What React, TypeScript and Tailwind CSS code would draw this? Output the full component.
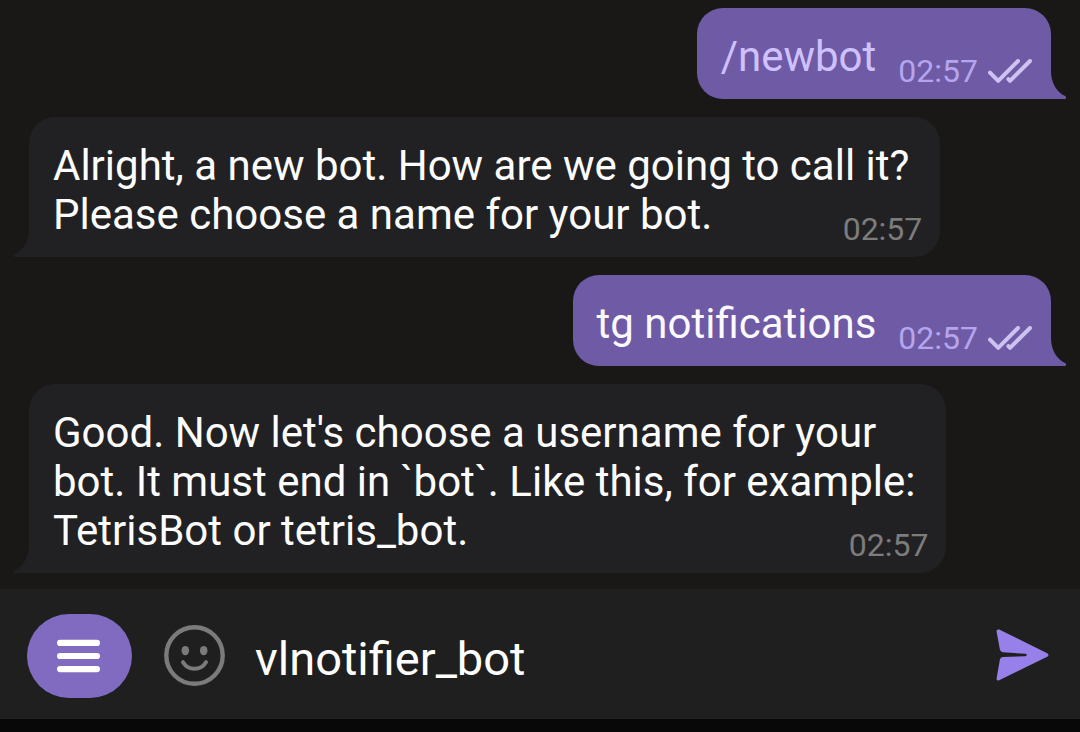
import { useState } from "react";

type Message = {
  id: number;
  outgoing: boolean;
  lines: string[];
  time: string;
  command?: boolean;
};

const messages: Message[] = [
  { id: 1, outgoing: true, lines: ["/newbot"], time: "02:57", command: true },
  {
    id: 2,
    outgoing: false,
    lines: [
      "Alright, a new bot. How are we going to call it?",
      "Please choose a name for your bot.",
    ],
    time: "02:57",
  },
  { id: 3, outgoing: true, lines: ["tg notifications"], time: "02:57" },
  {
    id: 4,
    outgoing: false,
    lines: [
      "Good. Now let's choose a username for your",
      "bot. It must end in `bot`. Like this, for example:",
      "TetrisBot or tetris_bot.",
    ],
    time: "02:57",
  },
];

function ReadTicks() {
  return (
    <svg
      className="h-6 w-11"
      viewBox="0 0 44 24"
      fill="none"
      stroke="currentColor"
      strokeWidth="4"
      strokeLinecap="round"
      strokeLinejoin="round"
      role="img"
      aria-label="Read"
    >
      <path d="M2 13.6L10.2 21.8L30 2" />
      <path d="M20.4 20.2L22 21.8L42 2" />
    </svg>
  );
}

function OutgoingMessage({ message }: { message: Message }) {
  const text = message.lines.join(" ");
  return (
    <li className="relative flex items-end gap-[22px] self-end rounded-[26px] rounded-br-none bg-[#6e5aa5] pl-6 pr-[19px]">
      {message.command ? (
        <a href="#newbot" className="pt-6 pb-[18px] text-[#cfc1ff]">
          {text}
        </a>
      ) : (
        <p className="pt-6 pb-[18px] text-[#fbf9fe]">{text}</p>
      )}
      <div className="flex items-center gap-2.5 pb-[9px] text-[32px] leading-[38px] text-[#b5a5ee]">
        <time>{message.time}</time>
        <span className="text-[#cdc2f0]">
          <ReadTicks />
        </span>
      </div>
      <svg
        className="absolute bottom-0 left-full h-9 w-[15px] text-[#6e5aa5]"
        viewBox="0 0 15 36"
        fill="currentColor"
        aria-hidden="true"
      >
        <path d="M0 0V36H14C15.2 36 15.4 33.4 14.2 33C6 29.5 0 20 0 8Z" />
      </svg>
    </li>
  );
}

function IncomingMessage({ message }: { message: Message }) {
  const lastLine = message.lines[message.lines.length - 1];
  return (
    <li className="relative self-start rounded-[26px] rounded-bl-none bg-[#212123] pt-6 pr-[31px] pb-[18px] pl-6 text-[#fcfcfc]">
      {message.lines.slice(0, -1).map((line) => (
        <p key={line}>{line}</p>
      ))}
      <div className="mr-[-13px] flex items-end justify-between">
        <p>{lastLine}</p>
        <time className="mb-[-9px] text-[32px] leading-[38px] text-[#7c7c7d]">
          {message.time}
        </time>
      </div>
      <svg
        className="absolute right-full bottom-0 h-9 w-[15px] text-[#212123]"
        viewBox="0 0 15 36"
        fill="currentColor"
        aria-hidden="true"
      >
        <path d="M15 0V36H1C-0.2 36 -0.4 33.4 0.8 33C9 29.5 15 20 15 8Z" />
      </svg>
    </li>
  );
}

function Composer() {
  const [draft, setDraft] = useState("vlnotifier_bot");
  return (
    <form
      className="flex items-center bg-[#1f1f1f] pt-[25px] pr-[31px] pb-[21px] pl-[27px]"
      onSubmit={(event) => event.preventDefault()}
    >
      <button
        type="button"
        aria-label="Bot menu"
        className="flex h-[84px] w-[105px] shrink-0 items-center justify-center rounded-full bg-[#806bc1]"
      >
        <svg className="h-[34px] w-[45px]" viewBox="0 0 45 34" fill="#fff" aria-hidden="true">
          <rect x="0" y="0.8" width="43" height="6.2" rx="3.1" />
          <rect x="0" y="13.9" width="43" height="6.2" rx="3.1" />
          <rect x="0" y="27" width="43" height="6.2" rx="3.1" />
        </svg>
      </button>
      <button type="button" aria-label="Emoji" className="ml-8 shrink-0 pb-px text-[#7b7b7b]">
        <svg className="size-[61px]" viewBox="0 0 61 61" fill="none" aria-hidden="true">
          <circle cx="30.5" cy="30.5" r="28.2" stroke="currentColor" strokeWidth="4.4" />
          <ellipse cx="21.3" cy="25.6" rx="3.8" ry="4.7" fill="currentColor" />
          <ellipse cx="39.7" cy="25.6" rx="3.8" ry="4.7" fill="currentColor" />
          <path
            d="M19 37.2C24.5 46 36.5 46 42 37.2"
            stroke="currentColor"
            strokeWidth="4"
            strokeLinecap="round"
          />
        </svg>
      </button>
      <input
        type="text"
        aria-label="Message"
        value={draft}
        onChange={(event) => setDraft(event.target.value)}
        className="ml-[30px] min-w-0 flex-1 bg-transparent pt-1.5 text-[47px] leading-[54px] text-white outline-none"
      />
      <button type="submit" aria-label="Send" className="shrink-0 pb-0.5 text-[#9780ea]">
        <svg className="h-[52px] w-[53px]" viewBox="0 0 53 52" fill="currentColor" aria-hidden="true">
          <path d="M3.2 0.6L51.2 24.2Q53.8 26 51.2 27.8L3.2 51.3Q0.3 52.2 0.6 49.2L3.9 30.6Q4.3 28.3 6.8 28L29.5 27.2Q32.2 26 29.5 24.8L6.8 23.2Q4.3 22.9 3.9 20.6L0.6 2.7Q0.3 -0.2 3.2 0.6Z" />
        </svg>
      </button>
    </form>
  );
}

export default function App() {
  return (
    <div className="flex min-h-screen flex-col bg-[#191816] font-['Roboto',sans-serif]">
      <main className="flex-1">
        <ul className="flex flex-col gap-[18px] pt-2 pr-[29px] pb-4 pl-[29px] text-[42px] leading-[49px]">
          {messages.map((message) =>
            message.outgoing ? (
              <OutgoingMessage key={message.id} message={message} />
            ) : (
              <IncomingMessage key={message.id} message={message} />
            ),
          )}
        </ul>
      </main>
      <Composer />
      <div className="h-[13px] bg-[#080808]" />
    </div>
  );
}
